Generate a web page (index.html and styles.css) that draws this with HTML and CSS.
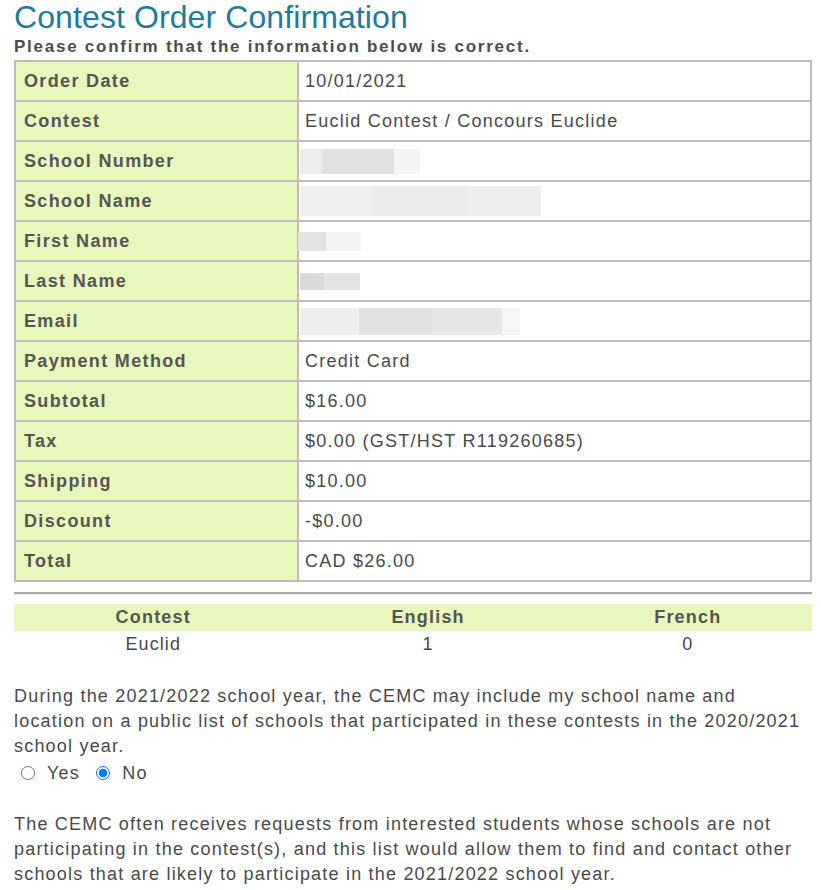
FILE: index.html
```html
<!DOCTYPE html>
<html lang="en">
<head>
  <meta charset="UTF-8" />
  <title>Contest Order Confirmation</title>
  <link rel="stylesheet" href="styles.css">
</head>
<body>
  <div class="page">
    <h1>Contest Order Confirmation</h1>
    <p class="lead">Please confirm that the information below is correct.</p>

    <table class="summary">
      <tr><th>Order Date</th><td>10/01/2021</td></tr>
      <tr><th>Contest</th><td>Euclid Contest / Concours Euclide</td></tr>
      <tr><th>School Number</th><td><span class="blur num"></span></td></tr>
      <tr><th>School Name</th><td><span class="blur school"></span></td></tr>
      <tr><th>First Name</th><td><span class="blur first"></span></td></tr>
      <tr><th>Last Name</th><td><span class="blur last"></span></td></tr>
      <tr><th>Email</th><td><span class="blur email"></span></td></tr>
      <tr><th>Payment Method</th><td>Credit Card</td></tr>
      <tr><th>Subtotal</th><td>$16.00</td></tr>
      <tr><th>Tax</th><td>$0.00 (GST/HST R119260685)</td></tr>
      <tr><th>Shipping</th><td>$10.00</td></tr>
      <tr><th>Discount</th><td>-$0.00</td></tr>
      <tr><th>Total</th><td>CAD $26.00</td></tr>
    </table>

    <hr>

    <table class="counts">
      <tr><th>Contest</th><th>English</th><th>French</th></tr>
      <tr><td>Euclid</td><td>1</td><td>0</td></tr>
    </table>

    <form class="consent">
      <p>During the 2021/2022 school year, the CEMC may include my school name and location on a public list of schools that participated in these contests in the 2020/2021 school year.</p>
      <div class="choices">
        <label><input type="radio" name="list" value="yes"> Yes</label>
        <label><input type="radio" name="list" value="no" checked> No</label>
      </div>
      <p class="note">The CEMC often receives requests from interested students whose schools are not participating in the contest(s), and this list would allow them to find and contact other schools that are likely to participate in the 2021/2022 school year.</p>
    </form>
  </div>
</body>
</html>
```

FILE: styles.css
```css
body {
  margin: 0;
  font-family: 'Liberation Sans', Arial, sans-serif;
  color: #4a4a4a;
  background: #fff;
}

.page {
  padding: 0 9px 0 14px;
}

h1 {
  font-size: 32px;
  font-weight: normal;
  letter-spacing: 0.1px;
  color: #1f7b9c;
  margin: 0;
  line-height: 34px;
}

.lead {
  font-size: 17px;
  font-weight: bold;
  letter-spacing: 1.75px;
  margin: 0;
  line-height: 26px;
  color: #4d4d4d;
}

.summary {
  width: 100%;
  border-collapse: collapse;
  border: 2px solid #bcbcbc;
  font-size: 18px;
  letter-spacing: 1.25px;
}

.summary th,
.summary td {
  border: 2px solid #bcbcbc;
  height: 38px;
  padding: 0 8px;
  text-align: left;
}

.summary th {
  width: 265px;
  background: #e8f7bc;
  color: #555;
  letter-spacing: 1.35px;
}

.summary td {
  padding-left: 6px;
}

.blur {
  display: inline-block;
  margin-left: -5px;
  vertical-align: middle;
}

.blur.num {
  width: 120px;
  height: 25px;
  background: linear-gradient(to right, #ececec 0 18%, #e1e1e1 18% 78%, #f5f5f5 78%);
}

.blur.school {
  width: 241px;
  height: 30px;
  background: linear-gradient(to right, #efefef 0 30%, #ebebeb 30% 70%, #eeeeee 70%);
}

.blur.first {
  margin-left: -7px;
  width: 63px;
  height: 19px;
  background: linear-gradient(to right, #e3e3e3 0 45%, #f5f5f5 45%);
}

.blur.last {
  width: 60px;
  height: 17px;
  background: linear-gradient(to right, #d9d9d9 0 40%, #e4e4e4 40%);
}

.blur.email {
  width: 220px;
  height: 27px;
  background: linear-gradient(to right, #eeeeee 0 27%, #e2e2e2 27% 60%, #e7e7e7 60% 92%, #f6f6f6 92%);
}

hr {
  margin: 10px 0 9px;
  border: 0;
  border-top: 2px solid #a9a9a9;
  border-bottom: 1px solid #ededed;
}

.counts {
  width: 100%;
  border-collapse: collapse;
  font-size: 18px;
  letter-spacing: 1.1px;
}

.counts th {
  background: #e8f7bc;
  color: #555;
  height: 27px;
  padding: 0;
  letter-spacing: 1.2px;
}

.counts td {
  text-align: center;
  height: 27px;
  padding: 0;
}

.consent {
  margin-top: 26px;
  font-size: 18px;
  letter-spacing: 1.2px;
  line-height: 25px;
}

.consent p {
  margin: 0;
}

.choices {
  margin: 2px 0 26px;
}

.choices label {
  margin-right: 3px;
}

.choices input {
  width: 14px;
  height: 14px;
  margin: 0 6px 0 7px;
  vertical-align: -1px;
}
```
